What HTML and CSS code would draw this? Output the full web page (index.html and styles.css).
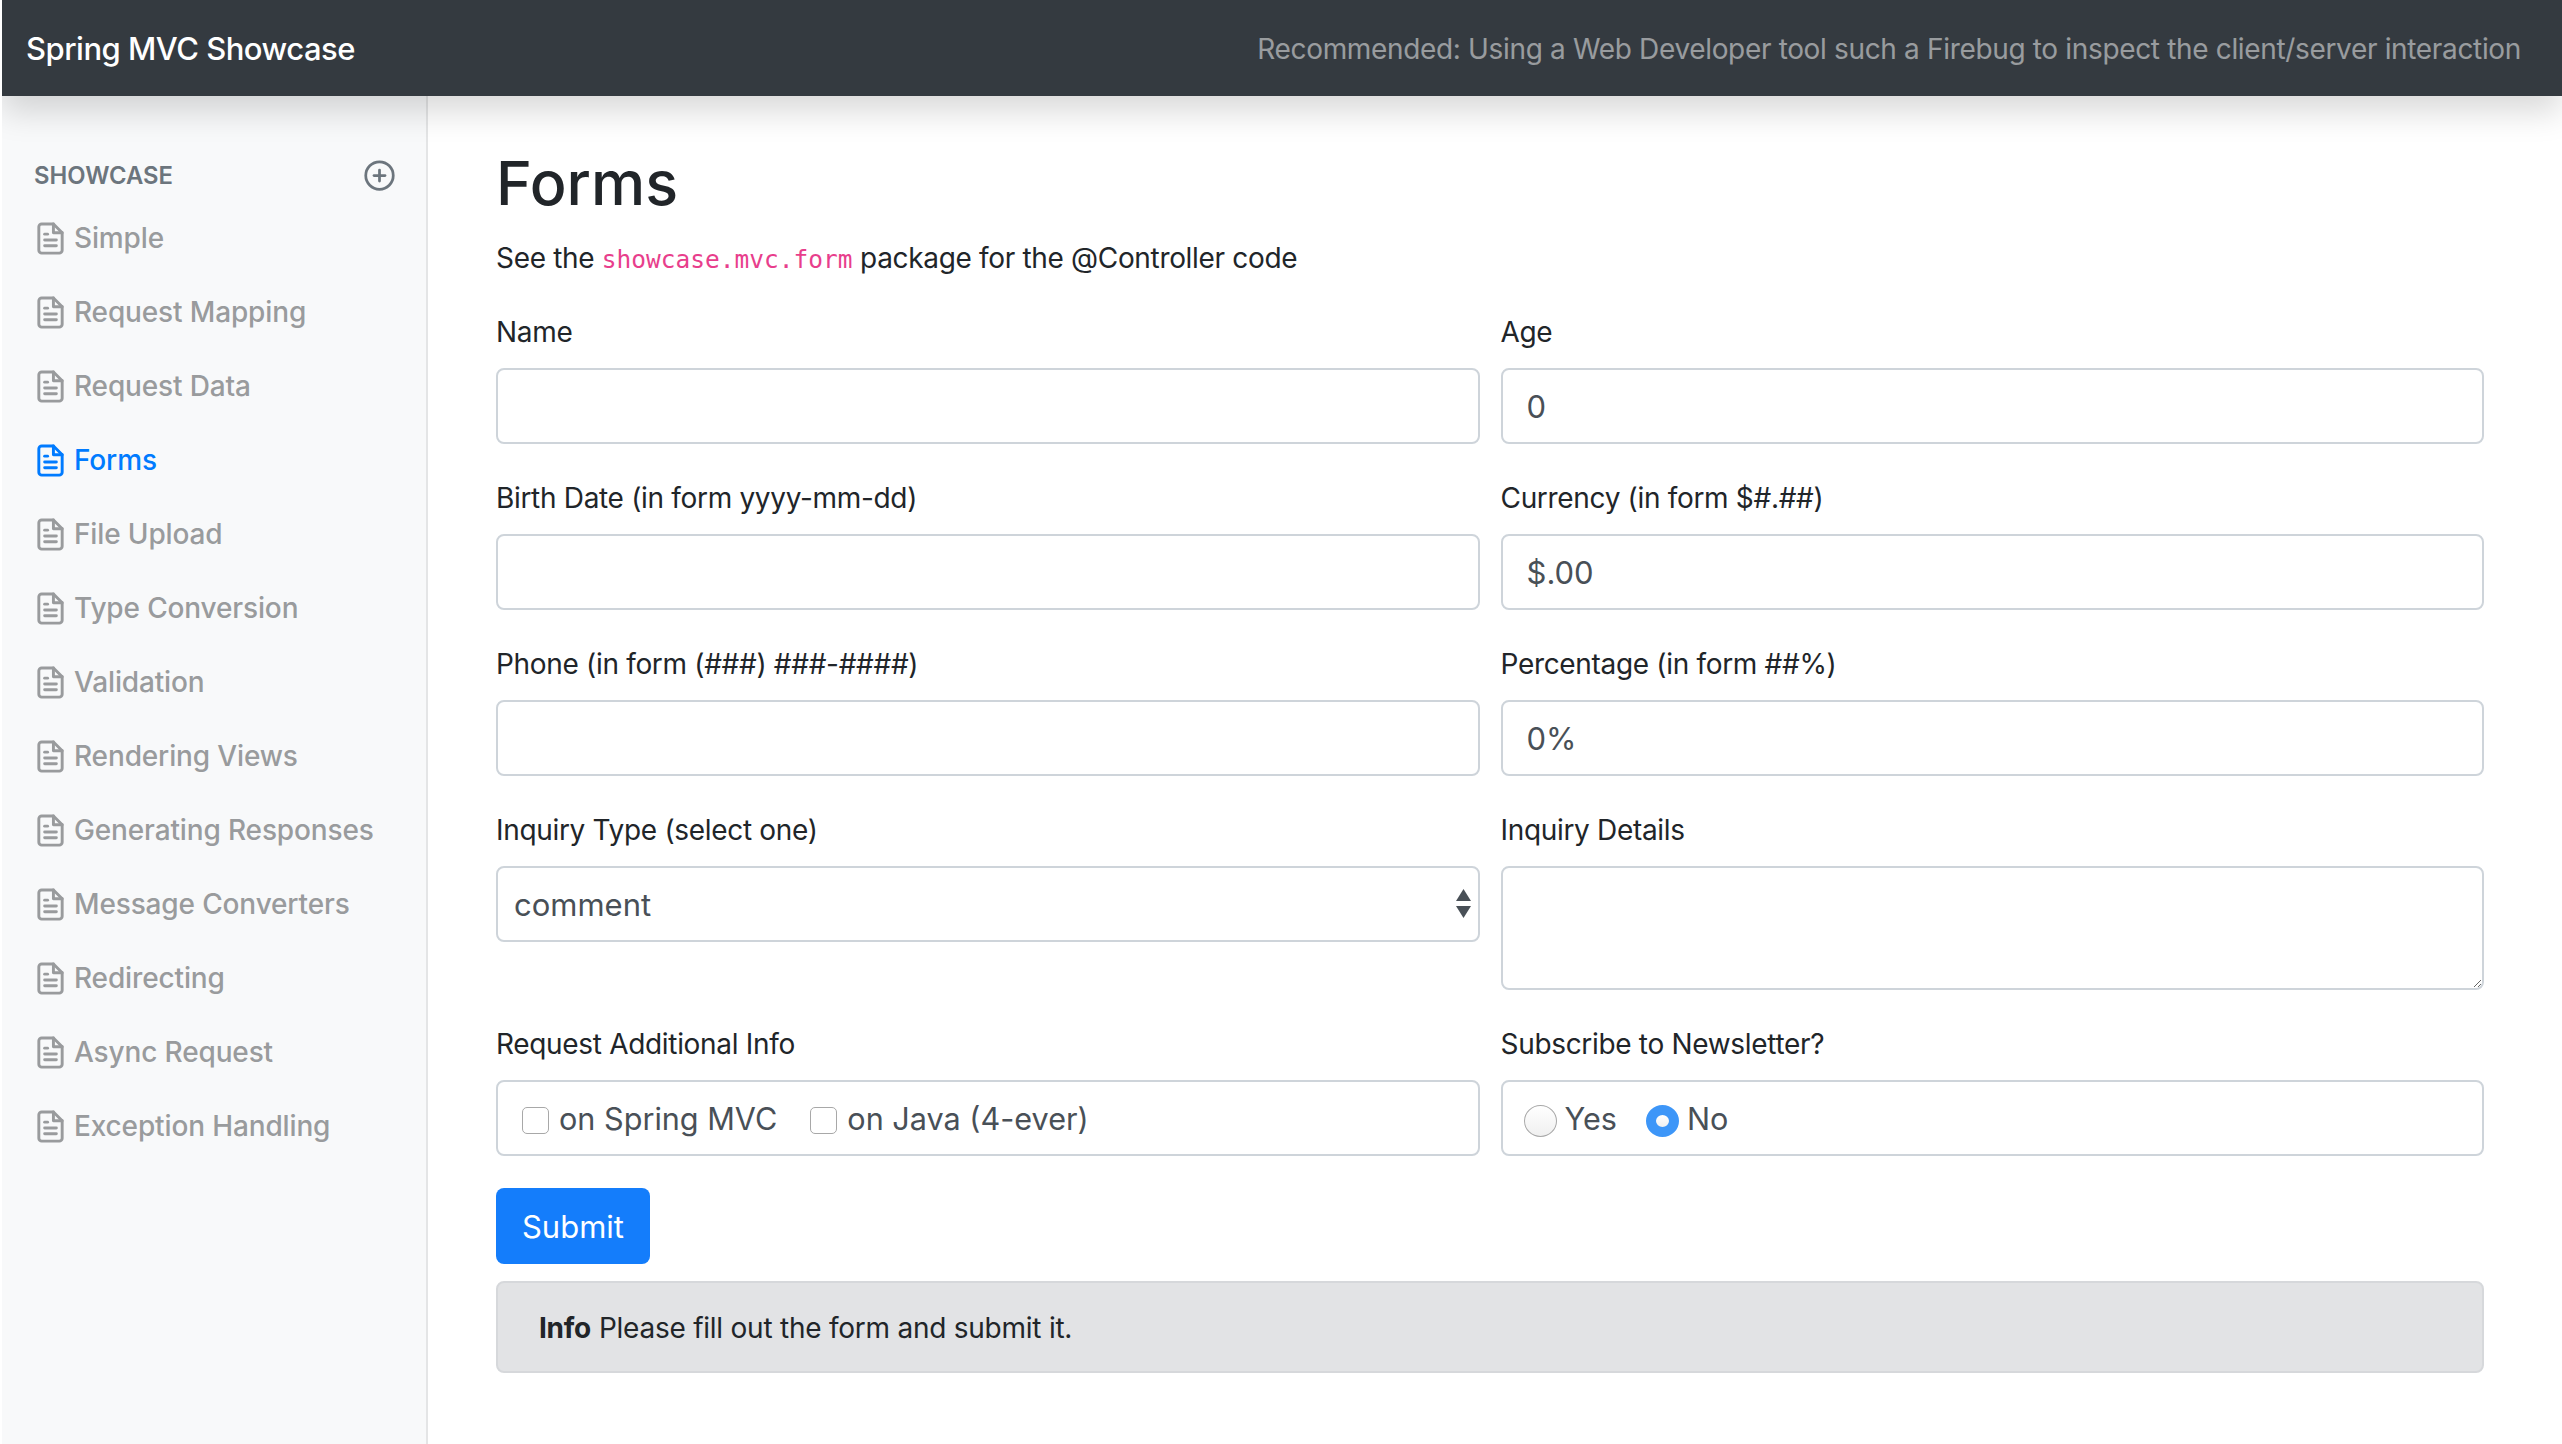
FILE: index.html
```html
<!DOCTYPE html>
<html lang="en">
<head>
  <meta charset="UTF-8">
  <title>Spring MVC Showcase</title>
  <link rel="stylesheet" href="styles.css">
</head>
<body>
  <svg class="icon-defs" width="0" height="0">
    <symbol id="file-text" viewBox="0 0 24 24">
      <path d="M14 2H6a2 2 0 0 0-2 2v16a2 2 0 0 0 2 2h12a2 2 0 0 0 2-2V8z"></path>
      <polyline points="14 2 14 8 20 8"></polyline>
      <line x1="16" y1="13" x2="8" y2="13"></line>
      <line x1="16" y1="17" x2="8" y2="17"></line>
      <polyline points="10 9 9 9 8 9"></polyline>
    </symbol>
  </svg>

  <div class="navbar">
    <a class="brand" href="#">Spring MVC Showcase</a>
    <span class="nav-note">Recommended: Using a Web Developer tool such a Firebug to inspect the client/server interaction</span>
  </div>

  <div class="layout">
    <div class="sidebar">
      <div class="sidebar-heading">
        <span>Showcase</span>
        <svg class="plus-icon" viewBox="0 0 24 24">
          <circle cx="12" cy="12" r="10"></circle>
          <line x1="12" y1="8" x2="12" y2="16"></line>
          <line x1="8" y1="12" x2="16" y2="12"></line>
        </svg>
      </div>
      <ul class="side-nav">
        <li><a href="#"><svg class="doc-icon"><use href="#file-text"></use></svg>Simple</a></li>
        <li><a href="#"><svg class="doc-icon"><use href="#file-text"></use></svg>Request Mapping</a></li>
        <li><a href="#"><svg class="doc-icon"><use href="#file-text"></use></svg>Request Data</a></li>
        <li><a href="#" class="active"><svg class="doc-icon"><use href="#file-text"></use></svg>Forms</a></li>
        <li><a href="#"><svg class="doc-icon"><use href="#file-text"></use></svg>File Upload</a></li>
        <li><a href="#"><svg class="doc-icon"><use href="#file-text"></use></svg>Type Conversion</a></li>
        <li><a href="#"><svg class="doc-icon"><use href="#file-text"></use></svg>Validation</a></li>
        <li><a href="#"><svg class="doc-icon"><use href="#file-text"></use></svg>Rendering Views</a></li>
        <li><a href="#"><svg class="doc-icon"><use href="#file-text"></use></svg>Generating Responses</a></li>
        <li><a href="#"><svg class="doc-icon"><use href="#file-text"></use></svg>Message Converters</a></li>
        <li><a href="#"><svg class="doc-icon"><use href="#file-text"></use></svg>Redirecting</a></li>
        <li><a href="#"><svg class="doc-icon"><use href="#file-text"></use></svg>Async Request</a></li>
        <li><a href="#"><svg class="doc-icon"><use href="#file-text"></use></svg>Exception Handling</a></li>
      </ul>
    </div>

    <div class="main">
      <h1>Forms</h1>
      <p class="intro">See the <code>showcase.mvc.form</code> package for the @Controller code</p>

      <form class="form-grid">
        <div class="form-group">
          <label for="name">Name</label>
          <input type="text" id="name" class="form-control">
        </div>
        <div class="form-group">
          <label for="age">Age</label>
          <input type="text" id="age" class="form-control" value="0">
        </div>
        <div class="form-group">
          <label for="birth">Birth Date (in form yyyy-mm-dd)</label>
          <input type="text" id="birth" class="form-control">
        </div>
        <div class="form-group">
          <label for="currency">Currency (in form $#.##)</label>
          <input type="text" id="currency" class="form-control" value="$.00">
        </div>
        <div class="form-group">
          <label for="phone">Phone (in form (###) ###-####)</label>
          <input type="text" id="phone" class="form-control">
        </div>
        <div class="form-group">
          <label for="percent">Percentage (in form ##%)</label>
          <input type="text" id="percent" class="form-control" value="0%">
        </div>
        <div class="form-group">
          <label for="inquiry">Inquiry Type (select one)</label>
          <div class="select-wrap">
            <select id="inquiry" class="form-control">
              <option>comment</option>
              <option>feedback</option>
              <option>suggestion</option>
            </select>
            <svg class="select-arrows" viewBox="0 0 15 29">
              <polygon points="7.5 0 15 12 0 12"></polygon>
              <polygon points="0 17 15 17 7.5 29"></polygon>
            </svg>
          </div>
        </div>
        <div class="form-group">
          <label for="details">Inquiry Details</label>
          <textarea id="details" class="form-control details"></textarea>
        </div>
        <div class="form-group">
          <label>Request Additional Info</label>
          <div class="form-control choice-box">
            <label class="choice"><input type="checkbox" class="check">on Spring MVC</label>
            <label class="choice"><input type="checkbox" class="check">on Java (4-ever)</label>
          </div>
        </div>
        <div class="form-group">
          <label>Subscribe to Newsletter?</label>
          <div class="form-control choice-box radios">
            <label class="choice"><input type="radio" name="news" class="radio">Yes</label>
            <label class="choice"><input type="radio" name="news" class="radio" checked>No</label>
          </div>
        </div>
      </form>

      <button type="button" class="submit-button">Submit</button>
      <div class="alert"><strong>Info</strong> Please fill out the form and submit it.</div>
    </div>
  </div>
</body>
</html>
```

FILE: styles.css
```css
/* Basic reset */
* {
  box-sizing: border-box;
  margin: 0;
  padding: 0;
}

html, body {
  height: 100%;
  overflow: hidden;
}

body {
  margin-left: 2px;
  display: flex;
  flex-direction: column;
  background-color: #fff;
  color: #212529;
  font-family: Inter, "Liberation Sans", sans-serif;
  font-size: 28px;
}

a {
  text-decoration: none;
}

.icon-defs {
  position: absolute;
}

/* Top bar */
.navbar {
  position: relative;
  z-index: 1;
  flex: none;
  height: 96px;
  padding: 0 41px 0 24px;
  display: flex;
  justify-content: space-between;
  align-items: center;
  background-color: #343a40;
  box-shadow: 0 16px 32px rgba(0, 0, 0, 0.15);
}

.brand {
  color: #fff;
  font-size: 31px;
  font-weight: 500;
  letter-spacing: -0.5px;
}

.nav-note {
  padding-top: 2px;
  color: rgba(255, 255, 255, 0.5);
  font-size: 28px;
  letter-spacing: -0.34px;
}

.layout {
  flex: 1;
  display: flex;
  min-height: 0;
}

/* Sidebar */
.sidebar {
  flex: none;
  width: 426px;
  padding: 63px 30px 0 32px;
  background-color: #f8f9fa;
  border-right: 2px solid #e4e5e6;
}

.sidebar-heading {
  height: 32px;
  display: flex;
  justify-content: space-between;
  align-items: center;
  color: #6c757d;
  font-size: 23.8px;
  font-weight: 600;
  text-transform: uppercase;
}

.plus-icon {
  width: 33px;
  height: 33px;
  fill: none;
  stroke: #6c757d;
  stroke-width: 2;
  stroke-linecap: round;
  stroke-linejoin: round;
}

.side-nav {
  list-style: none;
  margin-top: 10px;
}

.side-nav a {
  height: 74px;
  display: flex;
  align-items: center;
  gap: 6px;
  color: #999b9d;
  font-weight: 500;
  letter-spacing: -0.14px;
}

.side-nav a.active {
  color: #007bff;
}

.doc-icon {
  flex: none;
  width: 35px;
  height: 35px;
  margin-left: -1px;
  fill: none;
  stroke: currentColor;
  stroke-width: 2;
  stroke-linecap: round;
  stroke-linejoin: round;
}

/* Main content */
.main {
  flex: 1;
  min-width: 0;
  padding: 0 78px 0 68px;
}

h1 {
  height: 72px;
  margin-top: 51px;
  font-size: 61px;
  font-weight: 500;
  line-height: 72px;
}

.intro {
  height: 40px;
  margin-top: 19px;
  line-height: 40px;
  letter-spacing: -0.33px;
}

code {
  color: #e83e8c;
  font-family: "DejaVu Sans Mono", monospace;
  font-size: 24.5px;
  letter-spacing: 0;
}

.form-grid {
  margin-top: 34px;
  display: grid;
  grid-template-columns: 1fr 1fr;
  column-gap: 21px;
}

.form-group {
  margin-bottom: 34px;
}

.form-group > label {
  display: block;
  height: 40px;
  margin-bottom: 16px;
  line-height: 40px;
  letter-spacing: -0.32px;
}

.form-control {
  display: block;
  width: 100%;
  height: 76px;
  padding: 0 24px;
  background-color: #fff;
  border: 2px solid #ced4da;
  border-radius: 8px;
  color: #495057;
  font-family: inherit;
  font-size: 31px;
}

.select-wrap {
  position: relative;
}

select.form-control {
  padding: 0 40px 0 16px;
  appearance: none;
}

.select-arrows {
  position: absolute;
  top: 23px;
  right: 9px;
  width: 15px;
  height: 29px;
  fill: #495057;
  pointer-events: none;
}

.details {
  height: 124px;
  padding: 12px 24px;
}

.choice-box {
  display: flex;
  align-items: center;
  gap: 33px;
  padding: 0 24px;
}

.choice-box.radios {
  gap: 29px;
  padding: 0 21px;
}

.choice {
  display: flex;
  align-items: center;
  gap: 10px;
  font-size: 30.6px;
}

.radios .choice {
  gap: 8px;
}

.check,
.radio {
  flex: none;
  appearance: none;
  background-color: #fff;
  border: 1px solid #a8a8a8;
}

.check {
  width: 27px;
  height: 27px;
  margin-top: 4px;
  border-radius: 5px;
}

.radio {
  width: 33px;
  height: 32px;
  margin-top: 6px;
  border-radius: 50%;
  background-image: linear-gradient(#fff, #f0f0f0);
}

.radio:checked {
  border: 10px solid #3d96f8;
}

.submit-button {
  display: block;
  width: 154px;
  height: 76px;
  margin-top: -2px;
  background-color: #147dfb;
  border: none;
  border-radius: 8px;
  color: #fff;
  font-family: inherit;
  font-size: 31px;
}

.alert {
  height: 92px;
  margin-top: 17px;
  padding: 2px 0 0 41px;
  display: flex;
  align-items: center;
  gap: 0.28em;
  background-color: #e2e3e5;
  border: 2px solid #d6d8db;
  border-radius: 8px;
  letter-spacing: -0.24px;
}

.alert strong {
  font-weight: 700;
}
```
